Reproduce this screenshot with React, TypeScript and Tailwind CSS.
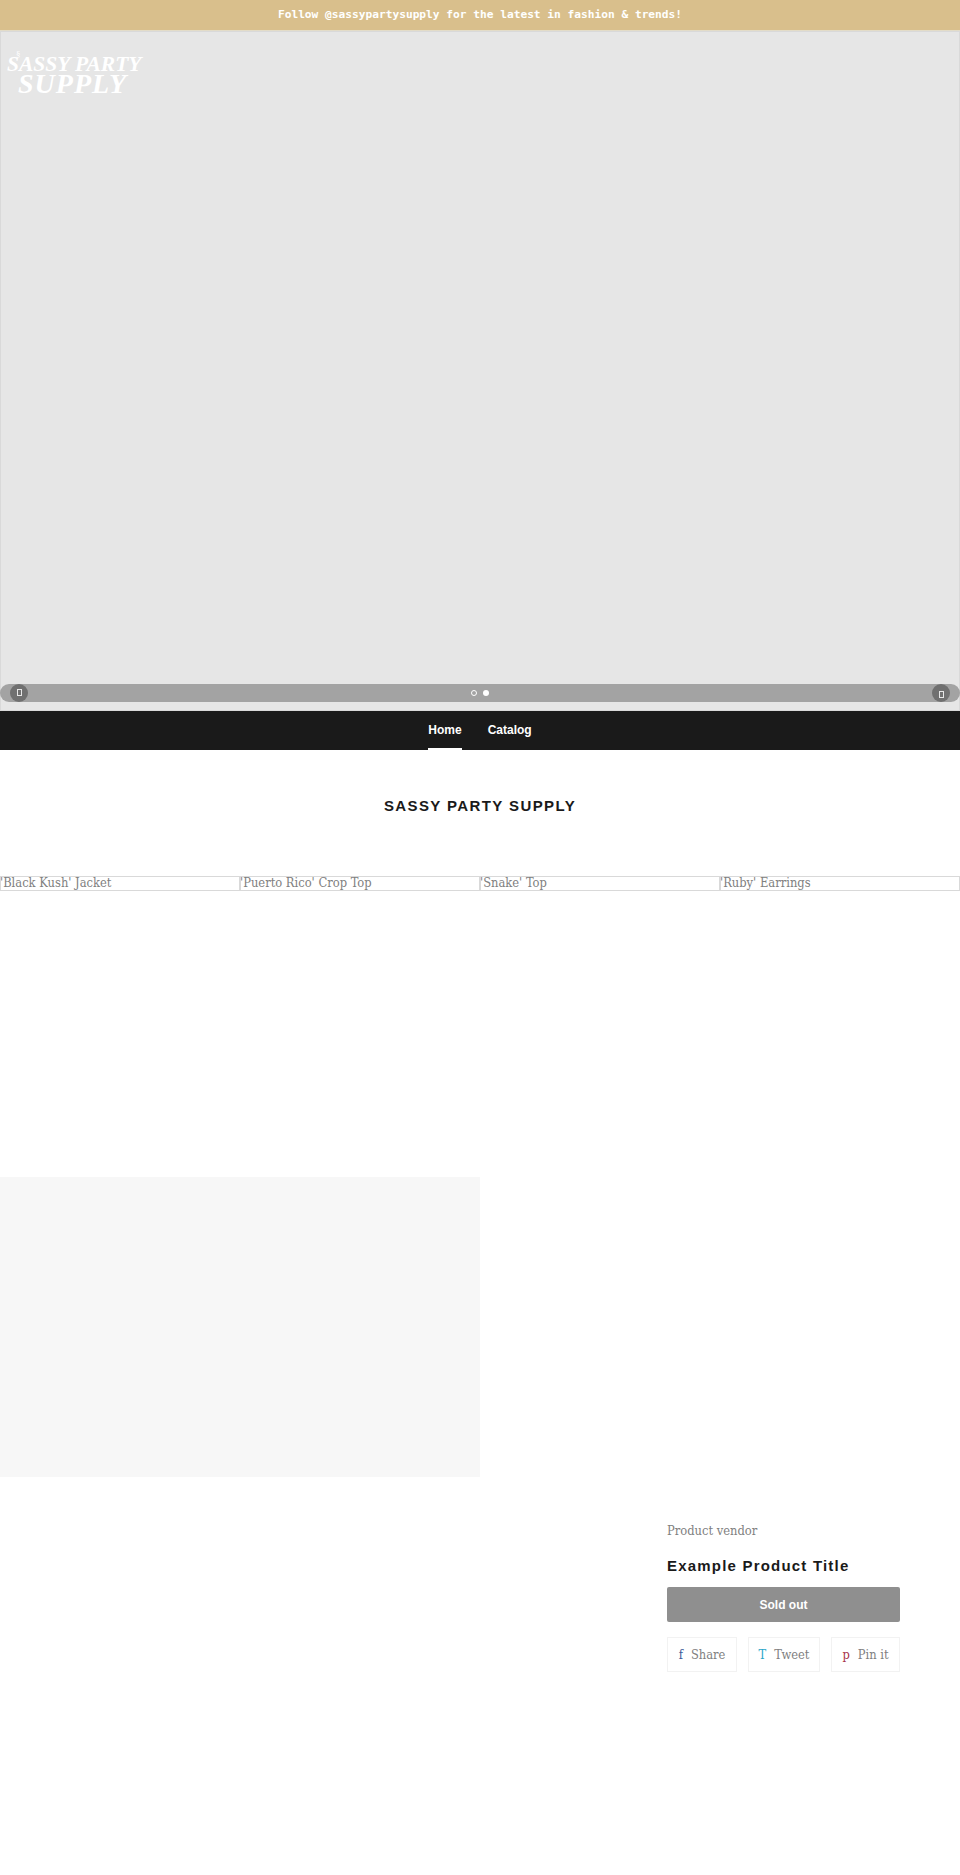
import React from 'react';

const PRODUCTS = ["'Black Kush' Jacket", "'Puerto Rico' Crop Top", "'Snake' Top", "'Ruby' Earrings"];

const SLAB = "font-['DejaVu_Serif_Condensed','DejaVu_Serif',serif]";

function ShareButton({ mark, label, color, width }: { mark: string; label: string; color: string; width: string }) {
  return (
    <a className={`flex h-[35px] items-center justify-center gap-[8px] border border-[#f2f2f2] text-[12.8px] text-[#808080] ${width}`}>
      <span className={color}>{mark}</span>
      <span>{label}</span>
    </a>
  );
}

export default function App() {
  return (
    <div className={`h-[1875px] w-[960px] overflow-hidden bg-white ${SLAB}`}>
      <div className="flex h-[31px] items-center justify-center border-b border-[#e3dcc8] bg-[#d9bf8c] pt-[1px] font-['DejaVu_Sans_Mono',monospace] text-[11.2px] font-bold text-white">
        Follow @sassypartysupply for the latest in fashion &amp; trends!
      </div>

      {/* Hero slideshow */}
      <div className="relative h-[680px] border border-[#d9d9d9] bg-[#e6e6e6]">
        <div className="absolute left-[6px] top-[21px] font-['Liberation_Serif',serif] font-bold italic leading-none text-white">
          <span className="absolute left-[9px] top-[-4px] text-[9px] font-normal not-italic leading-[10px]">§</span>
          <div className="text-[21.5px] leading-[22px]">SASSY PARTY</div>
          <div className="ml-[11px] text-[28px] leading-[17px] tracking-[1px]">SUPPLY</div>
        </div>
        <div className="absolute bottom-[8px] left-[-1px] right-[-1px] flex h-[18px] items-center justify-center gap-[6px] rounded-full bg-[#a3a3a3]">
          <span className="h-[6px] w-[6px] rounded-full border border-white" />
          <span className="h-[6px] w-[6px] rounded-full bg-white" />
          <span className="absolute left-[10px] top-0 flex h-[18px] w-[18px] items-center justify-center rounded-full bg-[#707070]">
            <span className="mb-[2px] h-[7px] w-[5px] border border-[#e6e6e6]" />
          </span>
          <span className="absolute right-[10px] top-0 flex h-[18px] w-[18px] items-center justify-center rounded-full bg-[#707070]">
            <span className="mt-[2px] h-[7px] w-[5px] border border-[#e6e6e6]" />
          </span>
        </div>
      </div>

      {/* Nav */}
      <nav className="flex h-[39px] justify-center gap-[26px] bg-[#1a1a1a] font-['Liberation_Sans',sans-serif] text-[12px] font-bold text-white">
        <a className="flex items-center border-b-2 border-white">Home</a>
        <a className="flex items-center border-b-2 border-transparent">Catalog</a>
      </nav>

      <h1 className="mt-[46px] text-center font-['Liberation_Sans',sans-serif] text-[15px] font-bold leading-[20px] tracking-[1.4px] text-[#1a1a1a]">
        SASSY PARTY SUPPLY
      </h1>

      {/* Featured products */}
      <div className="mt-[60px] grid grid-cols-4">
        {PRODUCTS.map(name => (
          <div key={name} className="h-[15px] overflow-hidden border border-[#d9d9d9] indent-[-1px] text-[12.8px] leading-[12px] text-[#808080]">
            {name}
          </div>
        ))}
      </div>

      <div className="mt-[286px] h-[300px] w-[480px] bg-[#f7f7f7]" />

      {/* Product card */}
      <div className="ml-[667px] mt-[46px] w-[233px]">
        <p className="text-[12.8px] leading-[16px] text-[#808080]">Product vendor</p>
        <h2 className="mt-[17px] font-['Liberation_Sans',sans-serif] text-[15px] font-bold leading-[20px] tracking-[1.2px] text-[#1a1a1a]">
          Example Product Title
        </h2>
        <button className="mt-[11px] h-[35px] w-full rounded-[2px] bg-[#8f8f8f] font-['Liberation_Sans',sans-serif] text-[12px] font-bold text-white">
          Sold out
        </button>
        <div className="mt-[15px] flex justify-between">
          <ShareButton mark="f" label="Share" color="text-[#3b5998]" width="w-[70px]" />
          <ShareButton mark="T" label="Tweet" color="text-[#2ba5c9]" width="w-[72px]" />
          <ShareButton mark="p" label="Pin it" color="text-[#a8324a]" width="w-[69px]" />
        </div>
      </div>
    </div>
  );
}
